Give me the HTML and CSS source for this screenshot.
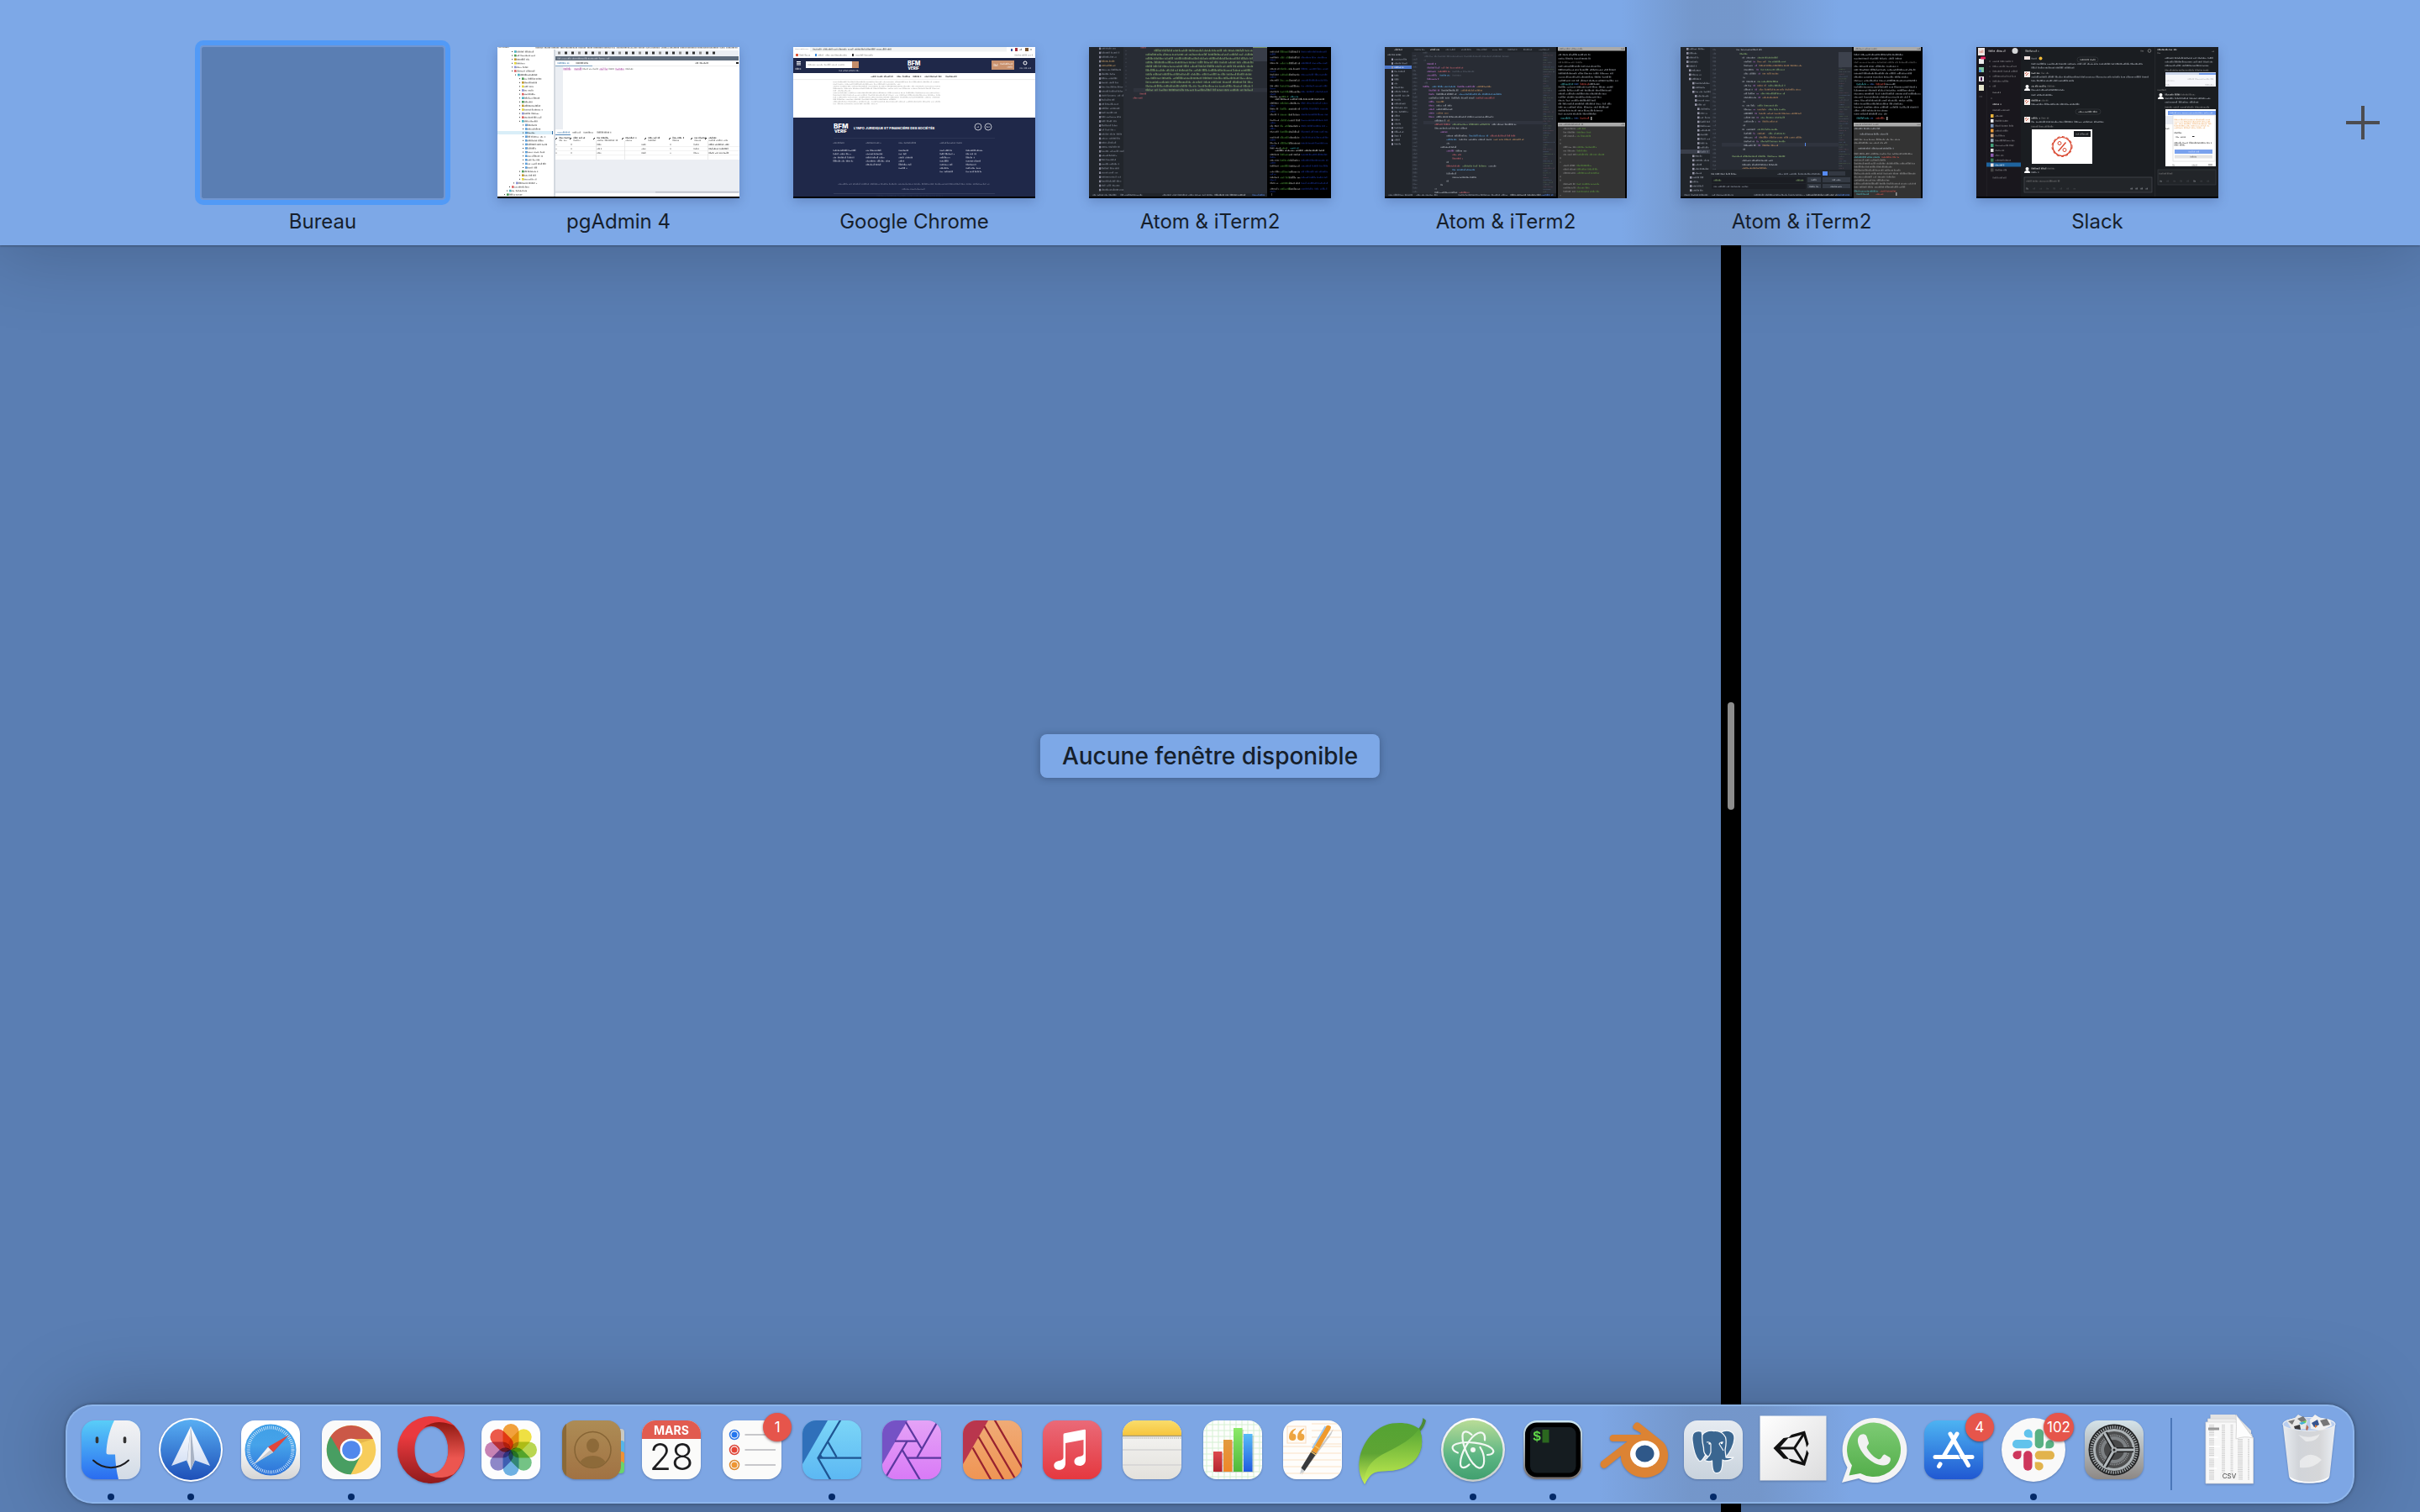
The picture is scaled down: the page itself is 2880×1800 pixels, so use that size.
FILE: index.html
```html
<!DOCTYPE html>
<html lang="fr">
	<head>
		<meta charset="utf-8">
		<title>Mission Control</title>
		<link rel="stylesheet" href="styles.css">
	</head>
	<body>
		<div class="wallpaper">
			<div class="pane pane-left"></div>
			<div class="divider"><div class="handle"></div></div>
			<div class="pane pane-right"></div>
		</div>

		<header class="spaces">
			<nav class="space-list">
				<button class="space active"><svg class="thumb" viewBox="0 0 288 180"><rect width="288" height="180" fill="#5a7eb3"/></svg><span>Bureau</span></button>
				<button class="space"><svg class="thumb" id="pgadmin" viewBox="0 0 288 180"></svg><span>pgAdmin 4</span></button>
				<button class="space"><svg class="thumb" id="chrome" viewBox="0 0 288 180"></svg><span>Google Chrome</span></button>
				<button class="space"><svg class="thumb" id="atom1" viewBox="0 0 288 180"></svg><span>Atom &amp; iTerm2</span></button>
				<button class="space"><svg class="thumb" id="atom2" viewBox="0 0 288 180"></svg><span>Atom &amp; iTerm2</span></button>
				<button class="space"><svg class="thumb" id="atom3" viewBox="0 0 288 180"></svg><span>Atom &amp; iTerm2</span></button>
				<button class="space"><svg class="thumb" id="slack" viewBox="0 0 288 180"></svg><span>Slack</span></button>
			</nav>
			<button class="add" aria-label="Ajouter un bureau">
				<svg viewBox="0 0 40 40"><path d="M20 0V40M0 20H40" stroke="#4c4c50" stroke-width="4"/></svg>
			</button>
		</header>

		<main class="desktop">
			<p class="message">Aucune fenêtre disponible</p>
		</main>

		<footer class="dock">
			<button class="app running" aria-label="Finder">
				<svg viewBox="0 0 90 90">
					<defs>
						<linearGradient id="finderL" x1="0" y1="0" x2="0" y2="1"><stop offset="0" stop-color="#59cdf8"/><stop offset="1" stop-color="#2a6cf0"/></linearGradient>
						<linearGradient id="finderR" x1="0" y1="0" x2="0" y2="1"><stop offset="0" stop-color="#f3f3f5"/><stop offset="1" stop-color="#d2dbe6"/></linearGradient>
						<clipPath id="tile"><rect x="10" y="10" width="70" height="70" rx="16"/></clipPath>
					</defs>
					<g clip-path="url(#tile)">
						<rect x="10" y="10" width="70" height="70" fill="url(#finderL)"/>
						<path d="M49 10C43 22 40 36 39.500 48Q39.500 50.500 42 50.500H50Q50.500 66 54 80H80V10Z" fill="url(#finderR)"/>
					</g>
					<path d="M28.500 31V35.500M61.500 31V35.500" stroke="#333" stroke-width="3.600" stroke-linecap="round"/>
					<path d="M24 57.500C36 69 54 69 66 57.500" fill="none" stroke="#1b1b1f" stroke-width="2" stroke-linecap="round"/>
				</svg>
			</button>
			<button class="app running" aria-label="Spark">
				<svg viewBox="0 0 90 90">
					<defs>
						<linearGradient id="spark" x1="0" y1="0" x2="0" y2="1"><stop offset="0" stop-color="#58aef3"/><stop offset="1" stop-color="#1e50b8"/></linearGradient>
						<linearGradient id="wing" x1="0" y1="0" x2="0" y2="1"><stop offset="0" stop-color="#fff"/><stop offset="1" stop-color="#cfdcf3"/></linearGradient>
					</defs>
					<circle cx="45" cy="45" r="38" fill="#fff"/>
					<circle cx="45" cy="45" r="36" fill="url(#spark)"/>
					<path d="M45 17L22 64L40 57.500L45 69L50 57.500L68 64Z" fill="url(#wing)"/>
					<path d="M45 17L40.500 58L45 69L49.500 58Z" fill="#a9b3c4"/>
					<path d="M45 17L41 58L45 69Z" fill="#e6eaf1"/>
				</svg>
			</button>
			<button class="app" aria-label="Safari">
				<svg viewBox="0 0 90 90">
					<defs>
						<linearGradient id="paper" x1="0" y1="0" x2="0" y2="1"><stop offset=".4" stop-color="#fff"/><stop offset="1" stop-color="#d5d5d5"/></linearGradient>
						<linearGradient id="compass" x1="0" y1="0" x2="0" y2="1"><stop offset="0" stop-color="#3f9fe6"/><stop offset=".4" stop-color="#46a3ea"/><stop offset="1" stop-color="#2b70d8"/></linearGradient>
					</defs>
					<rect x="10" y="10" width="70" height="70" rx="16" fill="url(#paper)"/>
					<circle cx="45" cy="45" r="30.500" fill="url(#compass)"/>
					<circle cx="45" cy="45" r="26.500" fill="none" stroke="#dcecfb" stroke-width="4" stroke-dasharray=".8 1.512"/>
					<path d="M67 27L42 42.500L25 62L48 47.500Z" fill="#1c4f98" opacity=".4"/>
					<path d="M66.500 27.500L42 41.500L48 48Z" fill="#e1463c"/>
					<path d="M25 62L42 41.500L48 48Z" fill="#f2f2f4"/>
					<path d="M25 62L45 45L48 48Z" fill="#c8cbd0"/>
				</svg>
			</button>
			<button class="app running" aria-label="Google Chrome">
				<svg viewBox="0 0 90 90">
					<rect x="10" y="10" width="70" height="70" rx="16" fill="#fafafa"/>
					<circle cx="45" cy="45" r="29.300" fill="#f7cd5a"/>
					<path d="M19.600 30.400A29.300 29.300 0 0 1 71 32H45A13 13 0 0 0 33.700 51.500Z" fill="#cb5847"/>
					<path d="M20.500 29A29.300 29.300 0 0 0 44.500 74.300L56.300 51.500A13 13 0 0 1 33.700 51.500Z" fill="#489e62"/>
					<path d="M45 32H71L56 37Z" fill="#d9a23b" opacity=".5"/>
					<circle cx="45" cy="45" r="13.300" fill="#fff"/>
					<circle cx="45" cy="45" r="10.800" fill="#5188ec"/>
				</svg>
			</button>
			<button class="app" aria-label="Opera">
				<svg viewBox="0 0 90 90">
					<defs>
						<linearGradient id="operaA" x1="0" y1="0" x2="0" y2="1"><stop offset=".3" stop-color="#ea3a3e"/><stop offset="1" stop-color="#8f1a1c"/></linearGradient>
						<linearGradient id="operaB" x1="0" y1="0" x2="0" y2="1"><stop offset="0" stop-color="#8f1811"/><stop offset=".65" stop-color="#ec5650"/></linearGradient>
					</defs>
					<path fill-rule="evenodd" d="M45 5A40 40 0 1 0 45 85A40 40 0 1 0 45 5ZM45.500 17C57 17 65.500 29 65.500 45S57 73.500 45.500 73.500S25.500 61 25.500 45S34 17 45.500 17Z" fill="url(#operaA)"/>
					<path d="M36 19Q47 10 60 12.500Q68 14 72 16A40 40 0 0 1 72 74Q66 77 58 78Q46 79 38 71.500C52 78 65.500 64 65.500 45C65.500 25 51 11 36 19Z" fill="url(#operaB)"/>
				</svg>
			</button>
			<button class="app" aria-label="Photos">
				<svg viewBox="0 0 90 90">
					<rect x="10" y="10" width="70" height="70" rx="16" fill="#fdfdfd"/>
					<g class="petals">
						<rect x="35.500" y="14" width="19" height="31" rx="9.500" fill="#f2a13c"/>
						<rect x="35.500" y="14" width="19" height="31" rx="9.500" fill="#efe043" transform="rotate(45 45 45)"/>
						<rect x="35.500" y="14" width="19" height="31" rx="9.500" fill="#b9d651" transform="rotate(90 45 45)"/>
						<rect x="35.500" y="14" width="19" height="31" rx="9.500" fill="#74c385" transform="rotate(135 45 45)"/>
						<rect x="35.500" y="14" width="19" height="31" rx="9.500" fill="#6fb1e2" transform="rotate(180 45 45)"/>
						<rect x="35.500" y="14" width="19" height="31" rx="9.500" fill="#8d87c8" transform="rotate(225 45 45)"/>
						<rect x="35.500" y="14" width="19" height="31" rx="9.500" fill="#c783b4" transform="rotate(270 45 45)"/>
						<rect x="35.500" y="14" width="19" height="31" rx="9.500" fill="#ec5a4b" transform="rotate(315 45 45)"/>
					</g>
				</svg>
			</button>
			<button class="app" aria-label="Contacts">
				<svg viewBox="0 0 90 90">
					<defs><linearGradient id="leather" x1="0" y1="0" x2="0" y2="1"><stop offset="0" stop-color="#ad8c55"/><stop offset="1" stop-color="#a17243"/></linearGradient></defs>
					<rect x="72" y="20" width="12" height="20" rx="4" fill="#c9c9c4"/>
					<rect x="72" y="34" width="12" height="16" rx="3" fill="#55b4ea"/>
					<rect x="72" y="47" width="12" height="16" rx="3" fill="#ef9136"/>
					<rect x="72" y="59" width="12" height="14" rx="4" fill="#69d46c"/>
					<rect x="10" y="10" width="70" height="70" rx="16" fill="url(#leather)"/>
					<path d="M15 14V76Q10 72 10 64V26Q10 18 15 14Z" fill="#8a6938"/>
					<circle cx="46.500" cy="45" r="21.500" fill="none" stroke="#866435" stroke-width="1.500"/>
					<ellipse cx="46.500" cy="40" rx="7.500" ry="8.500" fill="#8d6a39"/>
					<path d="M31.500 59Q37 52 46.500 52T61.500 59Q55 66.500 46.500 66.500T31.500 59Z" fill="#8d6a39"/>
				</svg>
			</button>
			<button class="app" aria-label="Calendrier">
				<svg viewBox="0 0 90 90">
					<g clip-path="url(#tile)">
						<rect x="10" y="10" width="70" height="70" fill="#fbfbfa"/>
						<rect x="10" y="10" width="70" height="22" fill="#e15b50"/>
					</g>
					<text class="cal-month" x="45" y="27">MARS</text>
					<text class="cal-day" x="45" y="69">28</text>
				</svg>
			</button>
			<button class="app" aria-label="Rappels">
				<svg viewBox="0 0 90 90">
					<rect x="10" y="10" width="70" height="70" rx="16" fill="#fbfbfa"/>
					<g fill="none" stroke-width="1.500">
						<circle cx="24" cy="27" r="5.500" stroke="#2f78e8"/><circle cx="24" cy="45" r="5.500" stroke="#dc4438"/><circle cx="24" cy="63" r="5.500" stroke="#dd8a30"/>
					</g>
					<circle cx="24" cy="27" r="3.500" fill="#2476ee"/><circle cx="24" cy="45" r="3.500" fill="#e64536"/><circle cx="24" cy="63" r="3.500" fill="#ee9633"/>
					<path d="M36.500 27H73M36.500 45H73M36.500 63H73" stroke="#b8b8bc" stroke-width="1.500"/>
				</svg>
				<span class="badge">1</span>
			</button>
			<button class="app running" aria-label="Affinity Designer">
				<svg viewBox="0 0 90 90">
					<defs><linearGradient id="afd" x1="0" y1="0" x2="0" y2="1"><stop offset="0" stop-color="#7bd5f7"/><stop offset="1" stop-color="#5cb8f3"/></linearGradient></defs>
					<g clip-path="url(#tile)">
						<rect x="10" y="10" width="70" height="70" fill="url(#afd)"/>
						<path d="M10 10H40L10 62Z" fill="#2f70ba"/>
						<path d="M55.500 9L28.500 54.700L43.500 81M40 35L50.500 53.500M28.500 54.700H80" fill="none" stroke="#1f5592" stroke-width="2.300"/>
						<path d="M32 49L29 55H38Q32 54 32 49Z" fill="#1f5592"/>
					</g>
				</svg>
			</button>
			<button class="app" aria-label="Affinity Photo">
				<svg viewBox="0 0 90 90">
					<defs><linearGradient id="afp" x1="0" y1="0" x2="0" y2="1"><stop offset="0" stop-color="#e5a3f7"/><stop offset="1" stop-color="#d97af6"/></linearGradient></defs>
					<g clip-path="url(#tile)">
						<rect x="10" y="10" width="70" height="70" fill="url(#afp)"/>
						<path d="M10 10H40L10 62Z" fill="#7552c5"/>
						<path d="M38 12L56.500 43M76 11L51 54.700M25 34.700H51M39.500 35L12 81M34 45.500L55 81M40 54.700H80" fill="none" stroke="#5b389f" stroke-width="2.300"/>
					</g>
				</svg>
			</button>
			<button class="app" aria-label="Affinity Publisher">
				<svg viewBox="0 0 90 90">
					<defs><linearGradient id="afb" x1="0" y1="0" x2="0" y2="1"><stop offset="0" stop-color="#f0ab76"/><stop offset="1" stop-color="#ef9554"/></linearGradient></defs>
					<g clip-path="url(#tile)">
						<rect x="10" y="10" width="70" height="70" fill="url(#afb)"/>
						<path d="M10 10H40L10 62Z" fill="#b9364d"/>
						<path d="M47.500 9L81 67M35.500 17L72.500 80M28.500 29.500L58.500 81M21.500 42.500L43.500 81" fill="none" stroke="#98222f" stroke-width="2.300"/>
					</g>
				</svg>
			</button>
			<button class="app" aria-label="Musique">
				<svg viewBox="0 0 90 90">
					<defs><linearGradient id="music" x1="0" y1="0" x2="0" y2="1"><stop offset="0" stop-color="#ea6a78"/><stop offset="1" stop-color="#e5383f"/></linearGradient></defs>
					<rect x="10" y="10" width="70" height="70" rx="16" fill="url(#music)"/>
					<path d="M34.500 27Q34.500 25.500 36 25.200L59.500 20.700Q61 20.400 61 22V57C61 61.500 57.500 64 54 64C50 64 47.500 62 47.500 58.800C47.500 55.500 50 53.600 53.500 52.900Q58.500 52.200 58.500 49.500V33L37 37V61C37 66 33.500 68.800 29.500 68.800C26 68.800 23.300 66.800 23.300 63.700C23.300 60.300 26 58.500 29.500 57.900Q34.500 57.200 34.500 54Z" fill="#fff"/>
				</svg>
			</button>
			<button class="app" aria-label="Notes">
				<svg viewBox="0 0 90 90">
					<defs>
						<linearGradient id="noteTop" x1="0" y1="0" x2="0" y2="1"><stop offset="0" stop-color="#f9dc6b"/><stop offset="1" stop-color="#f7c53c"/></linearGradient>
						<linearGradient id="noteBody" x1="0" y1="0" x2="0" y2="1"><stop offset="0" stop-color="#f8f8f7"/><stop offset="1" stop-color="#e3e1dc"/></linearGradient>
					</defs>
					<g clip-path="url(#tile)">
						<rect x="10" y="10" width="70" height="70" fill="url(#noteBody)"/>
						<rect x="10" y="10" width="70" height="18" fill="url(#noteTop)"/>
						<path d="M10 28.500H80" stroke="#a59a78" stroke-width="1.500"/>
						<path d="M11 31H80" stroke="#b9b8b4" stroke-width="1.500" stroke-dasharray="1.200 1.200"/>
						<path d="M10 45H80M10 63H80" stroke="#d3d3d3" stroke-width="1.500"/>
					</g>
				</svg>
			</button>
			<button class="app" aria-label="Numbers">
				<svg viewBox="0 0 90 90">
					<defs>
						<linearGradient id="barR" x1="0" y1="0" x2="0" y2="1"><stop offset="0" stop-color="#dd4a4e"/><stop offset="1" stop-color="#b52530"/></linearGradient>
						<linearGradient id="barO" x1="0" y1="0" x2="0" y2="1"><stop offset="0" stop-color="#e29b40"/><stop offset="1" stop-color="#ef8628"/></linearGradient>
						<linearGradient id="barG" x1="0" y1="0" x2="0" y2="1"><stop offset="0" stop-color="#8bea68"/><stop offset="1" stop-color="#4fb83b"/></linearGradient>
						<linearGradient id="barB" x1="0" y1="0" x2="0" y2="1"><stop offset="0" stop-color="#57bdf8"/><stop offset="1" stop-color="#205be0"/></linearGradient>
					</defs>
					<g clip-path="url(#tile)">
						<rect x="10" y="10" width="70" height="70" fill="#fdfefc"/>
						<path d="M14 10V80M21 10V80M28 10V80M35 10V80M42 10V80M49 10V80M56 10V80M63 10V80M70 10V80M77 10V80M10 15H80M10 22H80M10 29H80M10 36H80M10 43H80M10 50H80M10 57H80M10 64H80M10 71H80M10 77H80" stroke="#d5f0d3" stroke-width="1"/>
					</g>
					<path d="M24 72V49H36V35H48V21H58V28H70V72Z" fill="#777" opacity=".25"/>
					<rect x="22" y="47" width="10.500" height="24" fill="url(#barR)"/>
					<rect x="34" y="33" width="10.500" height="38" fill="url(#barO)"/>
					<rect x="46" y="19" width="10.500" height="52" fill="url(#barG)"/>
					<rect x="58" y="26" width="10.500" height="45" fill="url(#barB)"/>
				</svg>
			</button>
			<button class="app" aria-label="Pages">
				<svg viewBox="0 0 90 90">
					<rect x="10" y="10" width="70" height="70" rx="16" fill="#fefdfb"/>
					<path d="M44 14H74M44 22H79M44 30H79M44 38H79M10 41H79M10 49H79M10 57H79M10 65H79M13 73H77" stroke="#fae2c6" stroke-width="1.200"/>
					<rect x="15" y="17" width="22" height="20" fill="#fffaf3" stroke="#f8dcc0"/>
					<path d="M25 19.500Q17 22 17 29.500A4.200 4.200 0 1 0 21.500 25.500Q22 22.500 25 20.500ZM35 19.500Q27 22 27 29.500A4.200 4.200 0 1 0 31.500 25.500Q32 22.500 35 20.500Z" fill="#eda542"/>
					<path d="M32 75L37 63L70 20L67 27Z" fill="#555" opacity=".3"/>
					<path d="M30 74L32 66L37 69Z" fill="#c9ced2"/>
					<path d="M31.500 66.500L44 46L49.500 49.500L35.500 70Z" fill="#393a3c"/>
					<path d="M44 46L61.500 16.500Q64 14.500 67 17.500L66.500 20L49.500 49.500Z" fill="#ef9a2d"/>
					<path d="M45 43L60.500 17" stroke="#9cc6ef" stroke-width="2"/>
					<path d="M43 47L49 51M47.500 40L53.500 44" stroke="#f6c766" stroke-width="1.500"/>
				</svg>
			</button>
			<button class="app" aria-label="Coda">
				<svg viewBox="0 0 90 90">
					<defs>
						<linearGradient id="leafA" x1="0" y1="0" x2="0" y2="1"><stop offset="0" stop-color="#54a333"/><stop offset=".5" stop-color="#5ea434"/><stop offset="1" stop-color="#c9ec55"/></linearGradient>
						<linearGradient id="leafB" x1="0" y1="0" x2="0" y2="1"><stop offset="0" stop-color="#58a834"/><stop offset="1" stop-color="#c3ec50"/></linearGradient>
					</defs>
					<path d="M74 22Q81 16 81.500 7L85 10Q83 19 77 24Z" fill="#4c8b35"/>
					<path d="M12 86C6 77 4 66 6 56C9 36 24 17 45 13.500C56 12 68 13 77 20C84 36 79 54 66 62C54 70 44 70 32 70.500C20 71 17 77 12 86Z" fill="url(#leafA)"/>
					<path d="M77 20C84 36 79 54 66 62C54 70 44 70 32 70.500C20 71 17 77 12 86C11 66 22 56 38 48C56 39 68 32 77 20Z" fill="url(#leafB)"/>
				</svg>
			</button>
			<button class="app running" aria-label="Atom">
				<svg viewBox="0 0 90 90">
					<defs>
						<linearGradient id="atom" x1="0" y1="0" x2="0" y2="1"><stop offset="0" stop-color="#b9dc97"/><stop offset=".6" stop-color="#5cb583"/><stop offset="1" stop-color="#41a06f"/></linearGradient>
						<linearGradient id="ring" x1="0" y1="0" x2="0" y2="1"><stop offset="0" stop-color="#fff"/><stop offset="1" stop-color="#c9cdcb"/></linearGradient>
					</defs>
					<circle cx="45" cy="45" r="38" fill="url(#ring)"/>
					<circle cx="45" cy="45" r="35.500" fill="url(#atom)"/>
					<g fill="none" stroke="#f2f8f3" stroke-width="2.200" stroke-linecap="round">
						<path d="M27 48.500C20 46 18 40.500 25 38C36 34 59 36.500 67 43C72 47.500 68 51 62 51"/>
						<path d="M43.500 27C38 22 33 22 32.500 28C32 40 42 63 52 66.500C60 68 60 52 53.500 42"/>
						<path d="M59 33.500C60 27 57 23 51 25C41 29 30 50 30 61C30 68 36 67 40.500 62.500"/>
					</g>
					<circle cx="45" cy="45" r="3" fill="#f2f8f3"/>
				</svg>
			</button>
			<button class="app running" aria-label="iTerm2">
				<svg viewBox="0 0 90 90">
					<defs><linearGradient id="bezel" x1="0" y1="0" x2="0" y2="1"><stop offset="0" stop-color="#cfe9f4"/><stop offset="1" stop-color="#77706f"/></linearGradient></defs>
					<rect x="10" y="10" width="70" height="70" rx="16" fill="url(#bezel)"/>
					<rect x="12" y="12.500" width="66" height="65" rx="14" fill="#000"/>
					<rect x="18" y="18" width="54.500" height="54.500" rx="8" fill="#151c20"/>
					<text class="prompt" x="21" y="34">$</text>
					<rect x="32.500" y="21" width="8" height="15.500" fill="#2b671f"/>
				</svg>
			</button>
			<button class="app" aria-label="Blender">
				<svg viewBox="0 0 90 90">
					<path d="M44.500 16.500Q48 9.500 53 14L80 35.500C88 44 88 58 81.500 67C72 81 46 82 35 67Q29.500 60 30 52L12.500 66C8 69 3.500 64 6.500 59L37.500 35H21C15 35 15.500 27 21 27H52.500Q55 26 53 24.500L46 20.500Q43.500 19 44.500 16.500Z" fill="#dc8333"/>
					<ellipse cx="58.500" cy="50" rx="17.500" ry="16" fill="#fff"/>
					<ellipse cx="58.500" cy="49.500" rx="11" ry="10" fill="#2f5889"/>
				</svg>
			</button>
			<button class="app running" aria-label="Postgres">
				<svg viewBox="0 0 90 90">
					<defs><linearGradient id="pg" x1="0" y1="0" x2="0" y2="1"><stop offset="0" stop-color="#e6ebf1"/><stop offset="1" stop-color="#c9d3dd"/></linearGradient></defs>
					<rect x="10" y="10" width="70" height="70" rx="16" fill="url(#pg)"/>
					<g fill="#3a6690" stroke="#f3f6f9" stroke-width="1.300" stroke-linejoin="round">
						<path d="M31 23C23 21 19 25 20 34C21 43 24 54 28 58C31 60 33 55 36 51Z"/>
						<path d="M54 24C62 20 71 23 70 32C69.500 40 64 49 59 55L52 49Z"/>
						<path d="M32 27Q37 21 46 22.500Q55 22 59.500 30Q61 36 59 45L60 54Q65 54.500 69 54Q66 58 58.500 58L56 57Q56 65 54.500 69Q52 74 46.500 72Q43.500 70 43.500 58Q39 60 34 57Q38 56 38.500 53Q33 50 33.500 43Q31 33 32 27Z"/>
					</g>
					<path d="M37 36Q41 35 42 38V48Q41 52 38 54M57 36Q53 35 52 38L57 46" fill="none" stroke="#f3f6f9" stroke-width="1.200"/>
					<circle cx="40.500" cy="37.500" r="1.200" fill="#fff"/><circle cx="55" cy="37" r="1.200" fill="#fff"/>
				</svg>
			</button>
			<button class="app" aria-label="Unity">
				<svg viewBox="0 0 90 90">
					<defs><linearGradient id="unity" x1="0" y1="0" x2="1" y2="1"><stop offset="0" stop-color="#fff"/><stop offset="1" stop-color="#dcdcdd"/></linearGradient></defs>
					<rect x="5.500" y="4.500" width="79" height="77" fill="url(#unity)"/>
					<path fill="none" stroke="#111" stroke-width="3" d="M26 43H46.500L58 25.500M46.500 43L58 61"/>
					<path fill="#111" d="M21.500 43L33.500 31L40 30L28.500 43L40 56L33.500 55.500ZM39 31L43 27L59 22.500L57.500 26.500L43 30.500ZM39 55.500L43 59.500L59 64L57.500 60L43 56ZM56 24L59 22.500L63.500 38L61 42L60 37ZM56 62L59 64L63.500 49L61 45L60 50Z"/>
				</svg>
			</button>
			<button class="app" aria-label="WhatsApp">
				<svg viewBox="0 0 90 90">
					<defs><linearGradient id="wa" x1="0" y1="0" x2="0" y2="1"><stop offset="0" stop-color="#7dcb74"/><stop offset="1" stop-color="#54ae4b"/></linearGradient></defs>
					<path d="M45 7A38.500 38.500 0 1 1 27 79L7 84L13.500 66A38.500 38.500 0 0 1 45 7Z" fill="#f4f4f4"/>
					<path d="M45 12.500A32.300 32.300 0 1 1 29 73L15.500 75.500L19 63.500A32.300 32.300 0 0 1 45 12.500Z" fill="url(#wa)"/>
					<path d="M28 28C30 26 35 25 36.500 29L39 36.500C39.500 39 35 40 37.500 44C41 50 45 53.500 50 56C54 58 55 50 58 50.500L64 54C66 55.500 64.500 61 61 62.500C54 65.500 44 61 37 54.500C29 47 22.500 34 28 28Z" fill="#f1f1f1"/>
				</svg>
			</button>
			<button class="app" aria-label="App Store">
				<svg viewBox="0 0 90 90">
					<defs><linearGradient id="store" x1="0" y1="0" x2="0" y2="1"><stop offset="0" stop-color="#4db3f2"/><stop offset="1" stop-color="#2058d2"/></linearGradient></defs>
					<rect x="10" y="10" width="70" height="70" rx="16" fill="url(#store)"/>
					<g fill="none" stroke="#fff" stroke-width="5" stroke-linecap="round">
						<path d="M49 26L33 53M41 26L62.500 63.500M23 53.500H67M29 62L27.500 64.500"/>
					</g>
					<path d="M50 49.500L54 56.500" stroke="#2f7ce2" stroke-width="1"/>
				</svg>
				<span class="badge">4</span>
			</button>
			<button class="app running" aria-label="Slack">
				<svg viewBox="0 0 90 90">
					<circle cx="45" cy="45" r="38" fill="#f9f9f9"/>
					<path d="M43.700 30.500H38.700A5 5 0 1 1 43.700 25.400Z" fill="#61c3ec"/><rect x="20" y="33" width="23.700" height="10.300" rx="5" fill="#61c3ec"/>
					<rect x="46.700" y="20.300" width="10.300" height="23" rx="5" fill="#59b184"/><path d="M59.500 43.300V38.200A5 5 0 1 1 64.600 43.300Z" fill="#59b184"/>
					<rect x="46.700" y="46.300" width="23.300" height="10.300" rx="5" fill="#e2b34c"/><path d="M46.700 59.500H51.800A5 5 0 1 1 46.700 64.600Z" fill="#e2b34c"/>
					<rect x="33.200" y="46.300" width="10.300" height="23.400" rx="5" fill="#ce375c"/><path d="M30.500 46.300V51.400A5 5 0 1 1 25.400 46.300Z" fill="#ce375c"/>
				</svg>
				<span class="badge">102</span>
			</button>
			<button class="app" aria-label="Préférences Système">
				<svg viewBox="0 0 90 90">
					<defs><linearGradient id="prefs" x1="0" y1="0" x2="0" y2="1"><stop offset="0" stop-color="#d5e3e9"/><stop offset="1" stop-color="#8d8885"/></linearGradient></defs>
					<rect x="10" y="10" width="70" height="70" rx="16" fill="url(#prefs)"/>
					<circle cx="45" cy="45" r="30.500" fill="#232425"/>
					<circle cx="45" cy="45" r="27" fill="none" stroke="#a3a8ab" stroke-width="3.500" stroke-dasharray="1.400 1.427"/>
					<circle cx="45" cy="45" r="23.500" fill="#4c4d4e" stroke="#adb3b6" stroke-width="3"/>
					<circle cx="45" cy="45" r="17.500" fill="none" stroke="#8a8d90" stroke-width="2" stroke-dasharray="1.200 1"/>
					<circle cx="45" cy="45" r="14" fill="#48494a" stroke="#7d8184" stroke-width="4"/>
					<path d="M45 45H68M45 45L34 25M45 45L34 65" stroke="#1f2021" stroke-width="6"/>
					<path d="M45 45H69M45 45L33.500 25M45 45L33.500 65" stroke="#b4babd" stroke-width="3"/>
					<circle cx="45" cy="45" r="3.500" fill="#a9aeb1"/><circle cx="45" cy="45" r="1.500" fill="#222"/>
				</svg>
			</button>

			<div class="separator"></div>

			<button class="app" aria-label="Téléchargements">
				<svg viewBox="0 0 90 90">
					<path d="M22.500 3H52L71 22V60H22.500Z" fill="#e3e3e3"/>
					<path d="M19.500 8H52L72 27V60H19.500Z" fill="#eee" stroke="#d4d4d4" stroke-width=".8"/>
					<path d="M17 12H53L73.500 31V85H17Z" fill="#f8f8f8" stroke="#d9d9d9" stroke-width=".8"/>
					<g stroke="#bbb" stroke-dasharray="1 .8" opacity=".6">
						<path d="M24 15V81M58 32V81" stroke-width="6"/><path d="M38 15V73" stroke-width="4"/><path d="M48 15V73" stroke-width="3"/><path d="M68 32V81" stroke-width="2"/>
					</g>
					<path d="M20 20H34" stroke="#999" stroke-width="3" stroke-dasharray="13 1"/>
					<path d="M21 30H31M21 41H34M21 54H32M21 67H30" stroke="#fff" stroke-width="1.500"/>
					<path d="M53 32Q54 18 53 3L73.500 31Q63 28 53 32Z" fill="#fdfdfd" stroke="#cfcfcf" stroke-width=".8"/>
					<rect x="34" y="72" width="22" height="9" fill="#f2f2f2"/>
					<text class="file-type" x="45" y="79">CSV</text>
				</svg>
			</button>
			<button class="app" aria-label="Corbeille">
				<svg viewBox="0 0 90 90">
					<defs><linearGradient id="bin" x1="0" y1="0" x2="1" y2="0"><stop offset="0" stop-color="#eef0f2"/><stop offset=".3" stop-color="#d7d8da"/><stop offset=".7" stop-color="#dbdad9"/><stop offset="1" stop-color="#f0f2f5"/></linearGradient></defs>
					<ellipse cx="45" cy="14.500" rx="31" ry="8" fill="#b9cdee" stroke="#e7edf5" stroke-width="1.200"/>
					<path d="M18 10L28 7L32 3L43 9L41 20L24 20Z" fill="#e8e8e8"/>
					<path d="M46 9L52 3L60 8L70 9L72 16L60 22L47 20Z" fill="#f1f1f1"/>
					<path d="M20 11L28 9L25 15ZM31 8L38 5L42 10L36 12ZM58 10L66 8L70 15L62 17Z" fill="#777"/>
					<path d="M33 13L40 11L41 13L36 15Z" fill="#3faed8"/><path d="M37 11.500L42 10L41 13Z" fill="#6fd04c"/>
					<path d="M48 13L55 9L57 15L51 18Z" fill="#37558f"/><path d="M52 15L55 17L52 19Z" fill="#e07b33"/><path d="M27 17L34 15L35 21L28 20Z" fill="#3c3c3e"/>
					<path d="M42 15L44.500 18L43 22L41 21Z" fill="#b8705a"/>
					<path d="M14 16Q28 23 45 23T76 16L69.500 76Q68 84.500 45 84.500T21 76Z" fill="url(#bin)" opacity=".96"/>
					<path d="M32 27Q45 33 58 26Q54 36 41 35ZM34 58Q46 44 60 57Q50 68 34 66Z" fill="#f6f6f6" opacity=".6"/>
					<path d="M21.500 77Q32 83 45 83T69 77Q66 84.500 45 84.500T21.500 77Z" fill="#fff"/>
				</svg>
			</button>
		</footer>
		<script src="thumbs.js"></script>
	</body>
</html>
```

FILE: styles.css
```css
* {
	margin: 0; padding: 0;
	box-sizing: border-box;
}

body {
	font-family: "Inter", sans-serif;
	color: #16202c;
	background: #5a7eb3;
	min-height: 100vh;
	display: flex;
	flex-direction: column;
	position: relative;
	overflow: hidden;
}

button {
	font: inherit;
	color: inherit;
	background: none;
	border: 0;
}

/* desktop behind everything, split in two screens */

.wallpaper {
	position: absolute;
	inset: 0;
	display: flex;
}

.pane-left {
	flex: 2048 1 0;
}

.pane-right {
	flex: 808 1 0;
}

.divider {
	width: 24px;
	background: #000;
	display: flex;
	align-items: center;
	justify-content: center;
}

.handle {
	width: 8px;
	height: 128px;
	border-radius: 4px;
	background: #8c8c8c;
}

/* spaces bar */

.spaces {
	position: relative;
	display: grid;
	grid-template-columns: 1fr auto 1fr;
	align-items: center;
	padding: 56px 48px 14px;
	background: linear-gradient(to right, transparent 67%, rgba(110,140,185,0.6) 70%, rgba(110,140,185,0.6) 72%, transparent 76%) #7da8e7;
	box-shadow: 0 1px 2px rgba(0,0,0,0.3), 0 0 90px 10px rgba(0,0,0,0.2);
}

.space-list {
	grid-column: 2;
	display: flex;
	gap: 64px;
}

.space {
	width: 288px;
	font-size: 24px;
	line-height: 28px;
	text-align: center;
}

.space span {
	display: block;
	margin-top: 14px;
}

.thumb {
	display: block;
	width: 288px;
	height: 180px;
	box-shadow: 0 4px 12px rgba(50,70,120,0.3);
}

.active .thumb {
	outline: 6px solid #529af6;
	outline-offset: 2px;
	border-radius: 2px;
	box-shadow: 0 0 0 2px #7296d0;
}

.add {
	position: absolute;
	right: 48px;
	top: 126px;
	width: 40px;
	height: 40px;
}

.add svg {
	display: block;
}

.desktop {
	flex: 1;
}

.message {
	position: absolute;
	top: 50%; left: 50%;
	transform: translate(-50%, -50%);
	padding: 9px 26px;
	font-size: 28px;
	font-weight: 500;
	line-height: 34px;
	white-space: nowrap;
	background: #7da8e7;
	border-radius: 8px;
	box-shadow: 0 1px 8px rgba(30,50,80,0.4);
}

/* dock */

.dock {
	position: relative;
	display: flex;
	margin: 0 78px 10px;
	padding: 9px 6px 4px;
	border-radius: 32px;
	background: linear-gradient(to right, transparent 67%, rgba(110,140,185,0.6) 71%, rgba(110,140,185,0.6) 74%, transparent 78%) #7da6e4;
	box-shadow: inset 0 0 0 2px rgba(150,190,240,0.7), 0 0 4px rgba(0,0,0,0.4), 0 0 100px rgba(0,0,0,0.26);
}

.app {
	position: relative;
	flex: 1 1 0;
	min-width: 0;
	display: flex;
	flex-direction: column;
	align-items: center;
	height: 105px;
}

.app svg {
	width: 90px;
	height: 90px;
	flex: none;
	filter: drop-shadow(0 1px 1px rgba(30,50,90,0.35));
}

.running::after {
	content: "";
	width: 8px;
	height: 8px;
	margin-top: 7px;
	border-radius: 50%;
	background: #042a68;
}

.badge {
	position: absolute;
	top: 1px; right: 0;
	min-width: 34px;
	height: 34px;
	padding: 0 4px;
	border-radius: 17px;
	font-size: 17px;
	line-height: 34px;
	text-align: center;
	color: #fff;
	background: #e6554b;
	box-shadow: 0 1px 3px rgba(60,30,40,0.6);
}

.separator {
	width: 2px;
	height: 86px;
	margin: 7px 20px 0;
	background: #4b77b8;
}

.petals {
	isolation: isolate;
}

.petals rect {
	mix-blend-mode: multiply;
}

.cal-month {
	font: 700 14px "Inter", sans-serif;
	fill: #fff;
	text-anchor: middle;
}

.cal-day {
	font: 300 43px "Inter", sans-serif;
	fill: #1d1d1f;
	text-anchor: middle;
}

.prompt {
	font: 700 17px "Liberation Mono", monospace;
	fill: #5fd747;
}

.file-type {
	font: 8px "Inter", sans-serif;
	fill: #444;
	text-anchor: middle;
}
```

FILE: thumbs.js
```js
// window previews of the spaces bar, drawn in a 288x180 box
let seed = 7;
function rnd() {
	seed = (seed*16807)%2147483647;
	return seed/2147483647;
}

function box(x, y, w, h, fill, extra) {
	return `<rect x="${x}" y="${y}" width="${w}" height="${h}" fill="${fill}" ${extra||""}/>`;
}

function label(x, y, size, fill, text, weight) {
	return `<text x="${x}" y="${y}" font-size="${size}" font-weight="${weight||400}" fill="${fill}">${text}</text>`;
}

// row of greeked words, centered on y
function words(x, y, w, color, h) {
	h = h||2;
	let d = "";
	let end = x+w;
	while (x<end) {
		let len = Math.min(3+rnd()*9, end-x);
		for (let i=0; i<len; i+=1.3) {
			let t = h*(0.5+rnd()*0.6);
			d += `M${(x+i).toFixed(1)} ${(y+h/2-t).toFixed(1)}v${t.toFixed(1)}`;
		}
		x += len+1.5;
	}
	return `<path d="${d}" stroke="${color}" stroke-width="0.8" opacity="0.7"/>`;
}

function rows(n, x, y, pitch, wmin, wmax, colors, h) {
	let out = "";
	for (let i=0; i<n; i++)
		out += words(x, y+i*pitch, wmin+rnd()*(wmax-wmin), colors[i%colors.length], h);
	return out;
}

// indented lines of code, every line is [indent, width, color, ...]
function code(lines, x, y, pitch) {
	let out = "";
	lines.forEach((line, i)=>{
		let cx = x+line[0];
		for (let k=1; k<line.length; k+=2) {
			out += words(cx, y+i*pitch, line[k], line[k+1]);
			cx += line[k]+3;
		}
	});
	return out;
}

function draw(id, content) {
	document.getElementById(id).innerHTML = content;
}

const W = "#c3c8d0", G = "#98c379", R = "#e06c75", P = "#c678dd", O = "#d19a66", B = "#61afef", C = "#5c6370";

function pgadmin() {
	let s = box(0,0,288,180,"#fff") + words(2,0.5,12,"#222",1) + words(46,0.5,240,"#222",2);
	s += box(69,4,218,7,"#ebeef3") + box(69,11,218,5,"#5f6c7c") + words(72,13.5,62,"#dfe5ec");
	for (let i=0; i<24; i++) s += box(72+i*8,5.5,3,3,i%3?"#333":"#888");
	s += words(72,19,14,"#2a6aa5") + words(94,19,14,"#333") + words(236,19,15,"#333") + box(284,18,3,2,"#222");
	s += box(69,22,44,0.7,"#4a7ba8") + box(113,22,175,0.5,"#ddd");
	s += box(69,23,9,75,"#ebeef3") + words(79,26,9,"#a03096",3) + words(92,26,8,"#a03096",3) + words(102,26,18,"#666");
	s += words(122,26,9,"#a03096",3) + words(133,26,6,"#666") + words(141,26,10,"#a03096",3) + words(153,26,8,"#666");
	s += box(0,100,65,4,"#d9eef8") + box(65,100,1,4,"#2a6aa5") + box(67,3,2,175,"#d3d8df");
	let dots = ["#49b6c6","#4b9e55","#c39a2c","#e8d838","#8e96d8","#e06060"];
	for (let i=0; i<38; i++) {
		let x = i<6 ? 20 : i<7 ? 24 : i<19 ? 29 : i<31 ? 33 : i<34 ? 29 : i==34 ? 22 : 17-(i-35)*3;
		let y = 5.5+i*4.6;
		s += box(x-3,y-0.5,1,1,"#333") + box(x,y-1.3,2.5,2.6,i>18&&i<31?"#5aa0dd":dots[i%6]) + words(x+3,y,9+rnd()*14,"#333");
	}
	s += words(72,101.5,14,"#2a6aa5") + words(90,101.5,9,"#333") + words(103,101.5,12,"#333") + words(119,101.5,16,"#333") + box(69,104,18,0.8,"#2a6aa5");
	[74,91,119,153,180,209,235,252].forEach(x=>{
		s += words(x,108,x==252?8:13,"#111") + words(x,111,x==119||x==252?24:8,"#555");
		s += `<path d="M${x-5} 110l2-2" stroke="#111"/>`;
	});
	for (let i=0; i<3; i++) {
		let y = 116+i*5;
		s += words(70,y,1,"#444")+words(88,y,1,"#444")+words(119,y,5,"#555")+words(172,y,5,"#444")+words(206,y,1,"#444")+words(234,y,6,"#555")+words(252,y,23,"#333");
		s += box(69,y+2.5,219,0.4,"#ddd");
	}
	s += box(117,112,0.6,22,"#ddd") + box(151,112,0.6,22,"#ddd") + box(250,112,0.6,22,"#ddd");
	s += box(69,134,219,37,"#ebeef3") + box(69,171,219,3,"#dfe3ea") + box(188,172,99,1.5,"#c0c4cc") + box(0,178,288,2,"#000");
	draw("pgadmin", s);
}

function chrome() {
	let s = box(0,0,288,180,"#fff") + box(20,0,234,5.5,"#f1f3f4") + words(3,2.5,15,"#888",1) + words(24,2.5,93,"#333");
	s += box(259,2,2,3,"#3a55a0")+box(264,1,3,4,"#a8323e")+box(276,1,4,4,"#7b5632")+words(270,3,2,"#222")+words(283,3,1,"#222");
	s += box(3,8,3,3,"#e05a3c") + words(8,9.5,13,"#777") + box(26,8,2,3,"#3d8be0") + words(30,9.5,6,"#777") + words(39,9.5,26,"#777") + box(70,8,2,3,"#333") + words(75,9.5,21,"#777") + words(264,9.5,21,"#888");
	s += box(0,13,288,18,"#1f2849");
	s += `<path d="M4 17.500h5M4 19.200h5M4 21h5" stroke="#fff"/>`;
	s += words(3,26,7,"#fff") + box(15,17,55,8,"#fff") + words(18,21,44,"#999") + box(70,17,8,8,"#c48d69") + words(55,28,23,"#fff",1.5);
	s += label(136,22,7,"#fff","BFM",800) + label(136.5,26.5,4.5,"#fff","VERIF",800);
	s += box(236,16,27,11,"#c9926f") + words(239,21.5,4,"#fff",3) + words(247,20,14,"#fff") + words(255,23.5,6,"#fff");
	s += `<circle cx="276" cy="19" r="2" fill="none" stroke="#fff"/>` + words(270,25,13,"#fff",1.5);
	s += words(93,35,26,"#111") + words(124,35,15,"#111") + words(143,35,9,"#111") + words(157,35,20,"#111") + words(182,35,13,"#111") + box(0,38.5,288,0.6,"#ddd");
	[126,80,127,127,20,127,127,127,74,127,52].forEach((w,i)=>s += words(48,41.500+i*2.6,w,"#999",1.4));
	s += box(0,84,288,94,"#1f2849") + box(0,178,288,2,"#000");
	s += label(48,97,8,"#fff","BFM",800) + label(49,102,5,"#fff","VERIF",800);
	s += label(72,97.5,4,"#fff","L'INFO JURIDIQUE ET FINANCIÈRE DES SOCIÉTÉS",700);
	s += `<circle cx="220" cy="95" r="4" fill="none" stroke="#fff" stroke-width="0.7"/><circle cx="232" cy="95" r="4" fill="none" stroke="#fff" stroke-width="0.7"/>`;
	s += words(219,95,2,"#fff") + words(230.500,95,3,"#fff") + box(48,108,192,0.5,"#39415f");
	s += words(48,114,13,"#8f95a8") + words(87,114,17,"#8f95a8") + words(126,114,20,"#8f95a8") + words(175,114,26,"#8f95a8");
	s += rows(4,48,123,4.2,20,27,["#e8eaf2"]) + rows(5,87,123,4.2,16,29,["#e8eaf2"]) + rows(6,126,123,4.2,6,20,["#e8eaf2"]) + rows(7,175,123,4.2,6,19,["#e8eaf2"]) + rows(7,206,123,4.2,9,20,["#e8eaf2"]);
	s += words(54,163,180,"#7b829b") + words(130,169,28,"#7b829b") + box(48,174,192,0.8,"#39415f") + words(100,177,78,"#39415f",1);
	draw("chrome", s);
}

function statusBar(w) {
	return box(0,174,w,4,"#21252b") + words(5,176,28,"#9da5b4") + words(38,176,25,"#9da5b4") + words(88,176,60,"#9da5b4") + words(150,176,36,W) + words(w-17,176,14,"#568af2");
}

function atom1() {
	let s = box(0,0,288,180,"#000") + box(0,0,41,178,"#21252b") + box(41,0,171,178,"#282c34");
	for (let i=0; i<34; i++)
		s += box(12,i*5.1+0.5,2,2.6,"#889") + words(15,i*5.1+1.5,14+rnd()*12,i==3||i==4?"#c9a06a":"#949ba8");
	s += box(53,49,159,4.5,"#30343e");
	s += words(62,0.5,6,R);
	for (let i=0; i<11; i++) s += words(i?68:78,4+i*4.7,i?127:117,"#98c379",2.6) + words(44,4+i*4.7,1,C);
	s += words(61,55.5,7,R) + words(53,60.500,11,R) + box(195,0,17,17,"#383d48") + box(195,0,17,1,"#789060") + statusBar(212);
	for (let i=0; i<25; i++) {
		let y = 5.5+i*6.8;
		if (i==8||i==17) {
			s += words(216,y-0.8,12,W) + words(229,y-0.8,8,"#59a946") + words(240,y-0.8,9,"#3fb7c2") + words(222,y+2,58,"#eee");
			continue;
		}
		s += words(216,y,10,"#bbb") + words(228,y,11,"#4a9638",2.400) + words(239,y,12,"#bbb",2.400) + words(253,y,31,"#1f3cae");
		if (i%3!=2) s += words(216,y+3,6,"#1f3cae");
	}
	s += box(217,174,0.6,3,"#777");
	draw("atom1", s);
}

function terminals(x, green) {
	let s = box(x,0,82,180,"#000") + box(x+2,0,80,4.5,"#aaa") + words(x+4,2,27,"#555") + words(x+78,2,3,"#555");
	s += rows(4,x+3,9,4.6,24,78,[W,W,"#777"]) + rows(4,x+3,27,4.3,60,78,[W]);
	s += words(x+6,44,14,"#4fc1c9",2.5) + words(x+22,44,4,"#5080e0") + words(x+29,44,10,"#e0574f",2.5) + words(x+40,44,12,W);
	s += rows(9,x+3,47.5,4,35,79,[W]);
	s += words(x+6,84.5,14,"#4fc1c9",2.5) + words(x+22,84.5,4,"#5080e0") + words(x+29,84.5,10,"#e0574f",2.5) + box(x+41,83,1.5,4,"#999");
	s += box(x+2,90,80,90,"#333") + box(x+2,90,80,4.5,"#aaa") + words(x+4,92,28,"#555") + words(x+78,92,3,"#555");
	if (green) {
		for (let i=0; i<19; i++) {
			let y = 97+i*4.400;
			if (i%5==3||i%5==4) s += words(x+5,y,1,"#aaa");
			else s += words(x+9,y,14,"#999") + words(x+25,y,10+rnd()*24,"#5f9e3e");
		}
	} else {
		s += words(x+3,97,30,W) + words(x+10,103.500,33,W) + rows(2,x+3,110,4,40,77,["#aaa"]) + words(x+8,120.500,42,W);
		s += words(x+3,127,70,"#aaa") + words(x+3,131,30,"#4fc1c9") + words(x+36,131,20,"#e0574f") + rows(9,x+3,134.500,4,35,79,["#aaa"]);
		s += words(x+3,171.500,28,"#4fc1c9") + words(x+34,171.500,18,"#e0574f") + words(x+6,175,14,"#4fc1c9") + words(x+29,175,10,"#e0574f") + box(x+52,173,1.500,4,"#999");
	}
	return s;
}

function minimap(x) {
	return box(x,6,16,168,"#2b2f37") + rows(60,x+1,7,2.8,3,13,["#5e6b73","#6e5260","#596c8c","#5d7555"],1);
}

function atom2() {
	let s = box(0,0,288,180,"#000") + box(0,0,204,178,"#282c34") + box(0,0,204,6,"#21252b") + box(0,0,32,178,"#21252b");
	s += words(12,3,9,"#eee");
	for (let i=0; i<9; i++) s += words(36+i*18.5,3,11,i==1?"#eee":"#7d8491");
	s += box(0,22,32,4,"#4d78cc") + words(4,9,15,W);
	for (let i=0; i<22; i++) s += box(8,13.500+i*4.8,2,2.500,"#99a") + words(12,14.500+i*4.8,4+rnd()*14,i==2?"#fff":"#a4abb8");
	s += box(46,88,142,4,"#30343e");
	s += code([
		[0,5,C],[2,100,C],[1,2,C],[5,10,P],[5,14,P,26,R],[5,10,P,14,R,26,C],[5,12,P,12,B,10,C],[5,13,P],[2,3,C],
		[0,8,P,27,B,20,P,16,O],[7,12,P,20,W,25,O],[7,6,P,24,W,50,B],[7,24,W,26,W,22,R],[7,6,P,8,O],[7,6,P,18,W],[7,6,P,18,W],[7,6,P,14,O],
		[7,6,P,68,W],[14,12,W,2,O],[14,18,R,44,G,28,W],[14,38,W],[21,7,P],[28,24,W,22,B,30,R],[28,12,B,38,W,36,O],[28,3,W],[21,18,W],
		[28,8,P,12,W],[35,10,R],[35,12,R],[28,2,W],[28,16,R,28,G,8,W],[35,26,B],[28,12,W],[35,28,W],[28,2,W],[21,2,W],[14,2,W],[14,26,W,12,R]
	], 46, 6.500, 4.500);
	for (let i=0; i<37; i++) s += words(34,10+i*4.500,4,C);
	s += minimap(188) + statusBar(204) + terminals(204,true) + box(286,0,2,180,"#000");
	draw("atom2", s);
}

function atom3() {
	let s = box(0,0,288,180,"#000") + box(0,0,204,178,"#282c34") + box(0,0,35,178,"#21252b") + box(0,122,35,5,"#3a3f4b");
	for (let i=0; i<34; i++) {
		let x = i<5 ? 7 : i<8 ? 10 : i<11 ? 14 : i<14 ? 17 : i<25 ? 20 : i<30 ? 14 : 11;
		s += box(x,1+i*5.1,2.500,2.600,"#99a") + words(x+4,2.200+i*5.1,Math.min(6+rnd()*12,31-x),"#a4abb8");
	}
	s += box(49,114,139,4.500,"#30343e");
	let lines = [];
	for (let k=0; k<4; k++)
		lines.push([7,2,W,10,W,24,G],[9,8,W,2,P,10,O,20,G],[9,10,W,2,P,50,O],[9,12,W,2,P,28,G],[9,14,W,2,P,18,O],[8,2,W]);
	s += words(67,3,30,W) + words(71,8,10,G) + code(lines,67,12.500,4.750);
	s += words(62,130,40,G) + words(104,130,20,G) + words(74,135,36,W) + words(74,140,42,W) + words(74,144,28,O) + box(148,114,1,4,"#568af2");
	for (let i=0; i<31; i++) s += words(39,3+i*4.750,3,C);
	s += minimap(188) + box(188,6,16,18,"#3d424d");
	s += box(35,146,169,28,"#21252b") + words(37,151,30,W) + words(116,151,50,"#9da5b4") + box(169,148,6,5,"#568af2") + box(176,148,20,5,"#333842");
	s += box(37,155,112,7,"#1b1d23") + words(40,158.500,9,G) + words(138,158.500,8,G) + box(151,155,16,6,"#353b45") + box(169,155,33,6,"#353b45") + words(156,158,6,W) + words(181,158,9,W);
	s += box(37,163,112,6,"#1b1d23") + words(40,166,40,"#9da5b4") + box(151,163,16,5,"#353b45") + box(169,163,33,5,"#353b45") + words(154,166,10,W) + words(179,166,13,W);
	s += statusBar(204) + terminals(204,false) + box(286,0,2,180,"#000");
	draw("atom3", s);
}

function person(x, y) {
	return `<circle cx="${x+3.500}" cy="${y+2}" r="2" fill="#fff"/><path d="M${x} ${y+7}q0-3 3.500-3t3.500 3z" fill="#fff"/>`;
}

function avatar(x, y) {
	return box(x,y,7,7,"#f4ece9") + `<path d="M${x+2} ${y+5}l3-3M${x+1} ${y+3}l2-2" stroke="#d8604c"/>`;
}

function slack() {
	let s = box(0,0,288,180,"#1a1d21") + box(0,0,53,180,"#19171d") + box(12,0,0.500,178,"#2a282e");
	s += box(2,1,8,9,"#eee8e6") + words(4,5,4,"#d8604c",4) + box(3,14,6,6,"#eee") + box(5,11.500,6,3,"#e0245e",'rx="1"') + box(3,24,6,6,"#7fc4a0") + box(3,27,3,3,"#4d8fd8") + box(3,35,6,6,"#ecebef") + box(5,36,2,4,"#4a2050") + box(3,45,6,7,"#e6e6cc") + words(4,59,3,"#999",1);
	s += words(15,4.500,20,"#fff",2.500) + `<circle cx="46" cy="4.500" r="3.500" fill="#d6d6d8"/>`;
	for (let i=0; i<6; i++) s += words(16,17+i*5.900,1,"#999") + words(20,17+i*5.900,i==5?4:[24,28,29,27,18][i],"#8f8e92");
	s += words(20,54,9,"#aaa") + words(18,61,1,"#888") + words(20,68,10,"#fff") + words(20,75,20,"#9a999d");
	let face = ["#e8b23a","#eee","#7c93b5","#e89a3a","#c9a37e","#93a5b5","#45a37c","#ddd","#8d5bb0","#3b7c56"];
	for (let i=0; i<12; i++) {
		if (i==10) s += box(12,137.500,41,5,"#1f649f");
		s += box(17,80+i*5.850,3.500,4,i==10?"#f0e4e0":i==11?"#444":face[i%10]) + words(23,82+i*5.850,i==10?10:8+rnd()*16,i==10?"#fff":"#9a999d");
	}
	s += words(20,155.500,16,"#88878b");
	s += words(59,4.500,16,"#eee",2.500) + words(196,4.500,3,"#999") + `<circle cx="206" cy="4.500" r="1.800" fill="none" stroke="#aaa" stroke-width="0.6"/>`;
	s += box(57,11,7,4,"#f0e4e0") + words(66,13.500,6,W) + `<circle cx="76.500" cy="13.500" r="2" fill="#f0b93a"/>`;
	s += words(66,20,132,W) + words(66,24.500,51,W) + box(120,12,25,6,"#1a1d21",'rx="3" stroke="#3b3e42" stroke-width="0.6"') + words(124,15,18,"#ddd");
	s += avatar(57,29) + words(66,31,10,"#fff") + words(78,31,8,"#888") + words(66,35.500,139,W) + words(66,40,50,W);
	s += person(57,45) + words(66,46.500,17,"#fff") + words(85,46.500,8,"#888") + words(66,51,39,W) + words(66,57,25,W);
	s += avatar(57,62) + words(66,63.500,10,"#fff") + words(78,63.500,8,"#888") + words(66,68,57,W);
	s += box(118,74,30,6,"#1a1d21",'rx="3" stroke="#3b3e42" stroke-width="0.6"') + words(122,77,22,"#ddd");
	s += avatar(57,83) + words(66,84.500,10,"#fff") + words(78,84.500,8,"#888") + words(66,89,86,W) + words(66,94.500,27,"#999");
	s += box(66,98,72,41,"#fff") + box(116,100,20,7,"#1a1d21") + words(119,103.500,14,"#bbb");
	// promo seal
	s += `<circle cx="102" cy="118.500" r="11" fill="none" stroke="#d9442c" stroke-width="1.200"/><circle cx="102" cy="118.500" r="12" fill="none" stroke="#d9442c" stroke-dasharray="3 2.600"/>`;
	s += `<path d="M97.500 124L106.500 113.500" stroke="#d9442c" stroke-width="1.400"/><circle cx="99" cy="114.500" r="2" fill="none" stroke="#d9442c"/><circle cx="105" cy="122.500" r="2" fill="none" stroke="#d9442c"/>`;
	s += person(57,143) + words(66,144.500,17,"#fff") + words(85,144.500,8,"#888") + words(66,149,8,W);
	s += box(57,155,152,18,"#222529",'stroke="#50535a" stroke-width="0.6"') + words(60,159.500,39,"#888");
	for (let i=0; i<8; i++) s += words(60+i*8,168.500,2,i?"#55585d":W) ;
	for (let i=0; i<4; i++) s += words(184+i*6,168.500,2,W);
	s += box(212.500,0,0.600,178,"#303338") + words(216,3,22,"#fff") + words(216,7,3,"#888") + words(281,5,2,"#999");
	s += rows(3,225,13,4.500,44,59,[W]) + words(225,27.500,52,"#999") + box(225,30,60,17,"#f6f7fb") + box(225,30,60,3,"#c9d4ea") + box(265,31,20,2,"#6d98ea") + words(252,38,30,"#777",1) + words(226,40,10,"#aaa",1) + words(226,45,4,"#777",1) + words(273,45,10,"#777",1);
	s += words(216,51,11,"#888") + person(216,55) + words(225,56.500,17,"#fff") + words(244,56.500,17,"#888") + words(225,61,53,W) + words(225,65.500,39,W) + words(225,71.500,53,"#999");
	s += box(225,74,60,68,"#fff") + box(225,82,9,10,"#e8ebf2") + box(228,76,57,5,"#6f9bee") + words(231,78.500,50,"#e5edfd",1.500) + box(234,81,50,55,"#fff",'stroke="#ddd" stroke-width="0.8"');
	s += rows(5,236,86.500,2.400,36,45,["#ecA050"],1.600) + words(236,102,10,"#333") + words(238,107,11,"#333") + box(257,106,2.500,1,"#222") + words(236,114,44,"#333") + words(236,116.500,12,"#333") + words(225,97,4,"#222");
	s += box(236,122,45,5,"#7aa2ee") + words(253,124.500,12,"#dfe9fc") + box(236,128.500,45,4,"#e4e4e4") + words(255,130.500,7,"#555") + words(234,140.500,2,"#555") + words(257,140.500,6,"#555") + box(276,139,5,2.500,"#bbb");
	s += box(216,146,69,18,"#222529",'stroke="#3d4046" stroke-width="0.6"') + words(218,150.500,15,"#888");
	for (let i=0; i<8; i++) s += words(219+i*8,159.500,2,i%5?"#55585d":W);
	s += box(0,178,288,2,"#000");
	draw("slack", s);
}

pgadmin();
chrome();
atom1();
atom2();
atom3();
slack();
```
